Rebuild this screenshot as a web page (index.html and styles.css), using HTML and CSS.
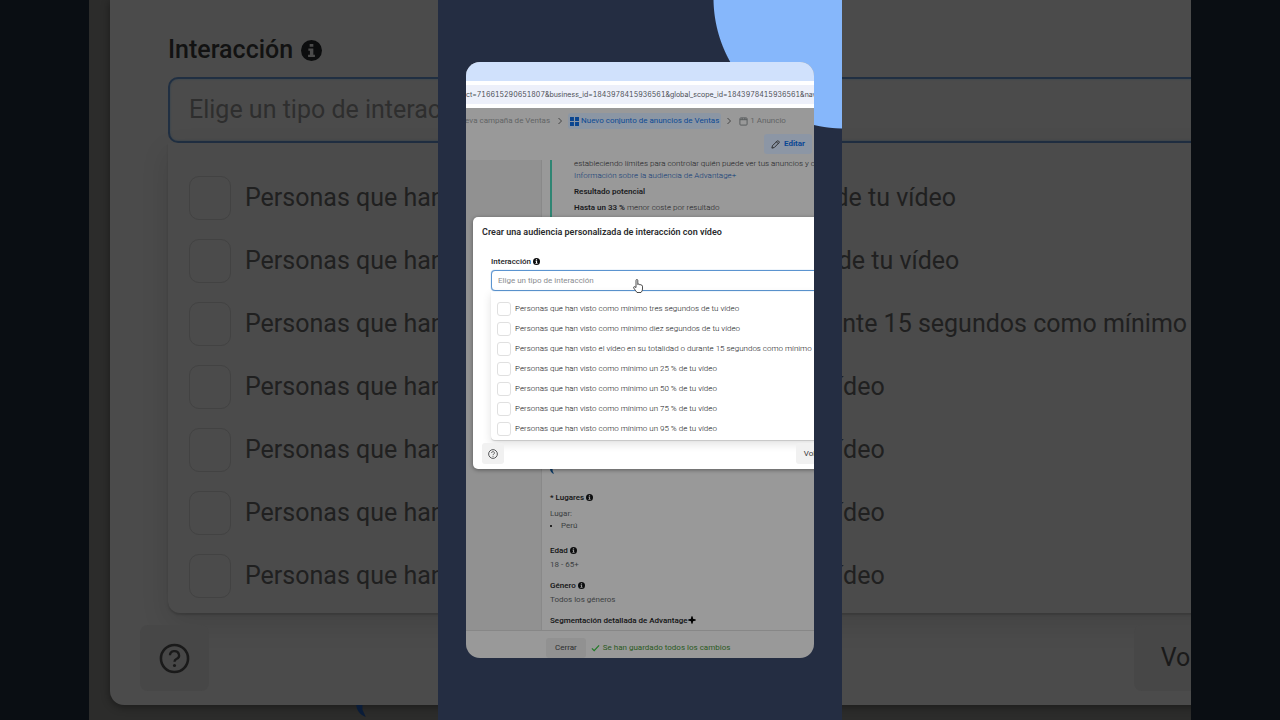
FILE: index.html
```html
<!DOCTYPE html>
<html lang="es">
<head>
    <meta charset="UTF-8">
    <meta name="viewport" content="width=device-width, initial-scale=1.0">
    <title>Crear una audiencia personalizada</title>
    <link rel="stylesheet" href="styles.css">
</head>
<body>
    <!-- Shared icons -->
    <svg class="sprite" aria-hidden="true">
        <symbol id="icon-info" viewBox="0 0 16 16">
            <circle cx="8" cy="8" r="8" fill="currentColor"/>
            <path class="info-mark" d="M6.6 3h2.8v2.2H6.6zM5.6 6.4h3.8v4.8h1.2V13H5.4v-1.8h1.4v-3H5.6z"/>
        </symbol>
        <symbol id="icon-help" viewBox="0 0 24 24">
            <circle cx="12" cy="12" r="10.5" fill="none" stroke="currentColor" stroke-width="2"/>
            <path d="M8.500 9.500a3.500 3.200 0 1 1 5 2.900c-1 .5-1.500 1-1.500 2.200" fill="none" stroke="currentColor" stroke-width="1.8"/>
            <circle cx="12" cy="17.4" r="1.2" fill="currentColor"/>
        </symbol>
    </svg>

    <!-- Enlarged dialog behind the phone -->
    <div class="backdrop" aria-hidden="true">
        <div class="backdrop-panel">
            <div class="dialog">
                <div class="dialog-body">
                    <label class="field-label" for="type-back">Interacción <svg class="info"><use href="#icon-info"/></svg></label>
                    <input class="field" id="type-back" type="text" placeholder="Elige un tipo de interacción">
                    <div class="options">
                        <label class="option"><input type="checkbox">Personas que han visto como mínimo tres segundos de tu vídeo</label>
                        <label class="option"><input type="checkbox">Personas que han visto como mínimo diez segundos de tu vídeo</label>
                        <label class="option"><input type="checkbox">Personas que han visto el vídeo en su totalidad o durante 15 segundos como mínimo</label>
                        <label class="option"><input type="checkbox">Personas que han visto como mínimo un 25 % de tu vídeo</label>
                        <label class="option"><input type="checkbox">Personas que han visto como mínimo un 50 % de tu vídeo</label>
                        <label class="option"><input type="checkbox">Personas que han visto como mínimo un 75 % de tu vídeo</label>
                        <label class="option"><input type="checkbox">Personas que han visto como mínimo un 95 % de tu vídeo</label>
                    </div>
                </div>
                <div class="dialog-footer">
                    <button class="btn help" type="button"><svg><use href="#icon-help"/></svg></button>
                    <button class="btn" type="button">Volver</button>
                </div>
            </div>
            <svg class="blue-mark" viewBox="0 0 4 5"><path d="M0 0h2.6v2L4 5C1.6 4 .3 2.500 0 0z"/></svg>
        </div>
    </div>

    <!-- Phone sized video -->
    <main class="phone">
        <div class="card">
            <div class="tabs"></div>
            <div class="address">
                <input class="url" type="text" aria-label="Dirección" readonly value="ct=716615290651807&amp;business_id=1843978415936561&amp;global_scope_id=1843978415936561&amp;nav_">
            </div>

            <div class="app">
                <nav class="crumbs">
                    <a href="#">Nueva campaña de Ventas</a>
                    <svg class="chevron" viewBox="0 0 6 8"><path d="M1.500 1l3 3-3 3"/></svg>
                    <a href="#" class="active">
                        <svg class="grid-icon" viewBox="0 0 10 10"><path d="M0 0h4.400v4.400H0zM5.600 0H10v4.400H5.600zM0 5.600h4.400V10H0zM5.600 5.600H10V10H5.600z"/></svg>
                        Nuevo conjunto de anuncios de Ventas
                    </a>
                    <svg class="chevron" viewBox="0 0 6 8"><path d="M1.500 1l3 3-3 3"/></svg>
                    <a href="#">
                        <svg class="ad-icon" viewBox="0 0 10 10"><path d="M1 3h8M3.500 1v2M6.500 1v2M2 1h6a1 1 0 0 1 1 1v6a1 1 0 0 1-1 1H2a1 1 0 0 1-1-1V2a1 1 0 0 1 1-1z"/></svg>
                        1 Anuncio
                    </a>
                </nav>
                <div class="toolbar">
                    <button class="edit" type="button">
                        <svg viewBox="0 0 10 10"><path d="M1 9l.6-2.600L7 1q.7-.5 1.400.2l.4.4q.7.700.2 1.400L3.600 8.400zM6 2l2 2"/></svg>
                        Editar
                    </button>
                </div>

                <div class="content">
                    <aside class="sidebar"></aside>
                    <div class="details">
                        <section class="advantage">
                            <p>estableciendo límites para controlar quién puede ver tus anuncios y con</p>
                            <p><a href="#">Información sobre la audiencia de Advantage+</a></p>
                            <p class="result"><b>Resultado potencial</b></p>
                            <p class="result"><b>Hasta un 33 %</b> menor coste por resultado</p>
                        </section>
                        <section class="audience">
                            <svg class="blue-mark" viewBox="0 0 4 5"><path d="M0 0h2.6v2L4 5C1.6 4 .3 2.500 0 0z"/></svg>
                            <h3>* Lugares <svg class="info"><use href="#icon-info"/></svg></h3>
                            <p class="place">Lugar:</p>
                            <ul><li>Perú</li></ul>
                            <h3>Edad <svg class="info"><use href="#icon-info"/></svg></h3>
                            <p>18 - 65+</p>
                            <h3>Género <svg class="info"><use href="#icon-info"/></svg></h3>
                            <p>Todos los géneros</p>
                            <h3>Segmentación detallada de Advantage<svg class="plus" viewBox="0 0 8 8"><path d="M4 0q.4 3.600 4 4-3.600.4-4 4-.4-3.600-4-4 3.600-.4 4-4z"/><path d="M3.300.500h1.400v7H3.300zM.5 3.300h7v1.400h-7z"/></svg></h3>
                        </section>
                    </div>
                </div>

                <footer class="app-footer">
                    <button class="close" type="button">Cerrar</button>
                    <span class="saved">
                        <svg viewBox="0 0 10 8"><path d="M1 4.500L3.500 7 9 1"/></svg>
                        Se han guardado todos los cambios
                    </span>
                </footer>

                <!-- Dialog -->
                <div class="dialog" role="dialog" aria-labelledby="dialog-title">
                    <h2 id="dialog-title">Crear una audiencia personalizada de interacción con vídeo</h2>
                    <div class="dialog-body">
                        <label class="field-label" for="type">Interacción <svg class="info"><use href="#icon-info"/></svg></label>
                        <input class="field" id="type" type="text" placeholder="Elige un tipo de interacción">
                        <div class="options">
                            <label class="option"><input type="checkbox">Personas que han visto como mínimo tres segundos de tu vídeo</label>
                            <label class="option"><input type="checkbox">Personas que han visto como mínimo diez segundos de tu vídeo</label>
                            <label class="option"><input type="checkbox">Personas que han visto el vídeo en su totalidad o durante 15 segundos como mínimo</label>
                            <label class="option"><input type="checkbox">Personas que han visto como mínimo un 25 % de tu vídeo</label>
                            <label class="option"><input type="checkbox">Personas que han visto como mínimo un 50 % de tu vídeo</label>
                            <label class="option"><input type="checkbox">Personas que han visto como mínimo un 75 % de tu vídeo</label>
                            <label class="option"><input type="checkbox">Personas que han visto como mínimo un 95 % de tu vídeo</label>
                        </div>
                    </div>
                    <div class="dialog-footer">
                        <button class="btn help" type="button" aria-label="Ayuda"><svg><use href="#icon-help"/></svg></button>
                        <button class="btn" type="button">Volver</button>
                    </div>
                    <svg class="pointer" viewBox="0 0 10 14"><path d="M3 8.500V1.500q0-1 .9-1t.9 1v4q.2-.6.9-.5t.8.800q.3-.5.900-.3t.7.900q.3-.4.8-.2t.6 1V10q0 2-1.500 3.500h-4Q2.500 11.500.7 9q-.4-.8.200-1.200T3 8.500z"/></svg>
                </div>
            </div>
        </div>
    </main>
</body>
</html>
```

FILE: styles.css
```css
* {
    box-sizing: border-box;
}

body {
    margin: 0;
    height: 100vh;
    overflow: hidden;
    position: relative;
    display: flex;
    justify-content: center;
    background-color: #0a0e13;
    font-family: Roboto, Arial, sans-serif;
    font-size: 8px;
    line-height: 12px;
    color: #3c3f42;
}

h2, h3, p, ul {
    margin: 0;
    padding: 0;
}

h3 {
    font-size: 8px;
    font-weight: 500;
    color: #111213;
}

a {
    text-decoration: none;
}

button, input {
    font-family: inherit;
    font-size: inherit;
    line-height: inherit;
    color: inherit;
}

button {
    border: none;
    cursor: pointer;
}

.sprite {
    position: absolute;
    width: 0;
    height: 0;
}

.info {
    width: 7px;
    height: 7px;
    vertical-align: -1px;
    color: #0c0d0e;
    fill: #fff;
}

.app .content .info {
    fill: #999;
}

/* Phone */
.phone {
    position: relative;
    flex: none;
    height: 100vh;
    aspect-ratio: 101 / 180;
    min-width: 0;
    padding: 62px 28px;
    display: flex;
    background: radial-gradient(circle at 406px -2px, #86b7fb 130px, transparent 131px) #242d42;
}

.card {
    flex: 1;
    min-width: 0;
    display: flex;
    flex-direction: column;
    border-radius: 14px;
    overflow: hidden;
    background-color: #999;
}

.tabs {
    height: 19px;
    background-color: #d0e1fc;
}

.address {
    padding: 4px 0;
    background-color: #fff;
}

.url {
    display: block;
    width: 100%;
    height: 19px;
    padding: 0 0 1px;
    border: none;
    background-color: #edf0fa;
    font-family: Inter, sans-serif;
    font-size: 7px;
    font-variant-numeric: tabular-nums;
    color: #4b4e55;
}

.app {
    position: relative;
    flex: 1;
    min-height: 0;
    display: flex;
    flex-direction: column;
    white-space: nowrap;
}

.crumbs {
    display: flex;
    align-items: center;
    height: 26px;
    margin-left: -11px;
    gap: 7px;
}

.crumbs a {
    display: flex;
    align-items: center;
    gap: 2px;
    color: #626465;
}

.crumbs .active {
    padding: 2px;
    margin: 0 -2px;
    border-radius: 3px;
    background-color: #8b96a4;
    color: #0d4a94;
}

.crumbs svg {
    flex: none;
}

.chevron {
    width: 6px;
    height: 8px;
    fill: none;
    stroke: #444;
}

.grid-icon {
    width: 9px;
    height: 9px;
    fill: #0a4590;
}

.ad-icon {
    width: 9px;
    height: 9px;
    fill: none;
    stroke: #55585a;
    stroke-width: 1;
}

.toolbar {
    display: flex;
    justify-content: flex-end;
    height: 26px;
    padding: 0 2px 6px;
}

.edit {
    display: flex;
    align-items: center;
    gap: 4px;
    padding: 0 7px;
    border-radius: 3px;
    background-color: #8c96a5;
    color: #0a4794;
    font-weight: 700;
}

.edit svg {
    width: 9px;
    height: 9px;
    fill: none;
    stroke: #222;
    stroke-width: 1;
}

.content {
    flex: 1;
    min-height: 0;
    display: flex;
    overflow: hidden;
}

.sidebar {
    flex: none;
    width: 76px;
    background-color: #919191;
    border-right: 1px solid #898989;
}

.details {
    flex: 1;
    min-width: 0;
    display: flex;
    flex-direction: column;
    justify-content: space-between;
    padding: 0 0 3px 8px;
}

.advantage {
    height: 260px;
    margin-top: -2px;
    padding-left: 22px;
    border-left: 2px solid #2f8573;
    font-weight: 300;
    color: #1a1b1d;
}

.advantage a {
    color: #0f3a78;
}

.advantage b {
    font-weight: 600;
}

.result {
    margin-top: 4px;
}

.audience h3 {
    margin-top: 9px;
}

.audience p {
    margin-top: 2px;
}

.audience .place {
    margin-top: 4px;
}

.audience .blue-mark + h3 {
    margin-top: 18px;
}

.audience ul {
    padding-left: 11px;
    margin-bottom: 13px;
}

.audience li::marker {
    color: #000;
}

.blue-mark {
    display: block;
    width: 4px;
    height: 5px;
    fill: #0b3a66;
}

.plus {
    width: 8px;
    height: 8px;
    vertical-align: -1px;
    fill: #000;
}

.app-footer {
    display: flex;
    gap: 5px;
    height: 28px;
    padding: 7px 0 0 80px;
    border-top: 1px solid #878787;
}

.close {
    padding: 0 9px;
    border-radius: 3px;
    background-color: #919191;
    color: #2c2d2f;
}

.saved {
    display: flex;
    align-items: center;
    gap: 3px;
    height: 19px;
    color: #2a5a1e;
}

.saved svg {
    width: 9px;
    height: 8px;
    fill: none;
    stroke: #1f7a25;
    stroke-width: 1.3;
}

/* Dialog */
.dialog {
    background-color: #fff;
    white-space: nowrap;
}

.app .dialog {
    position: absolute;
    top: 109px;
    left: 7px;
    right: -29px;
    border-radius: 5px;
    padding: 9px 9px 5px;
    box-shadow: 0 1px 4px rgba(0, 0, 0, 0.4);
}

.dialog h2 {
    font-size: 9px;
    font-weight: 600;
    line-height: 12px;
    margin-bottom: 18px;
    color: #2b2c2e;
}

.dialog-body {
    padding-left: 9px;
}

.field-label {
    display: block;
    font-weight: 500;
    color: #1c1d1f;
}

.field {
    display: block;
    width: 100%;
    height: 21px;
    margin-top: 2px;
    padding: 0 6px;
    border: 1px solid #5b94d0;
    border-radius: 4px;
    outline: none;
    background-color: #fff;
    box-shadow: 0 0 1px #5b94d0;
}

.field::placeholder {
    color: #8b8d90;
    opacity: 1;
}

.options {
    padding: 8px 6px 1px;
    border-radius: 0 0 4px 4px;
    box-shadow: 0 4px 10px rgba(0, 0, 0, 0.12), 0 1px 1px rgba(0, 0, 0, 0.15);
}

.option {
    display: flex;
    align-items: center;
    gap: 4px;
    height: 20px;
    font-weight: 300;
    color: #111214;
}

.option input {
    appearance: none;
    flex: none;
    width: 14px;
    height: 14px;
    margin: 0;
    border: 1px solid #e0e0e0;
    border-radius: 3px;
    background-color: #fff;
}

.dialog-footer {
    display: flex;
    justify-content: space-between;
    margin-top: 3px;
}

.btn {
    height: 21px;
    padding: 0 8px;
    border-radius: 3px;
    background-color: #f1f1f1;
    color: #3a3b3d;
}

.help {
    padding: 0 6px;
}

.help svg {
    display: block;
    width: 10px;
    height: 10px;
}

.pointer {
    position: absolute;
    left: 160px;
    top: 62px;
    width: 10px;
    height: 14px;
    fill: #fff;
    stroke: #222;
    stroke-width: 0.8;
}

/* Enlarged backdrop */
.backdrop {
    position: absolute;
    inset: 0;
    display: flex;
    padding: 0 89px;
    font-size: 25px;
    line-height: 30px;
}

.backdrop-panel {
    flex: 1;
    min-width: 0;
    overflow: hidden;
    padding-left: 21px;
    background-color: #2c2c2b;
}

.backdrop .dialog {
    margin-right: -96px;
    padding: 35px 30px 14px;
    border-radius: 0 0 0 14px;
    background-color: #4b4b4b;
    box-shadow: 0 2px 8px rgba(0, 0, 0, 0.4);
}

.backdrop .dialog-body {
    padding-left: 28px;
}

.backdrop .field-label {
    color: #121212;
}

.backdrop .info {
    width: 21px;
    height: 21px;
    margin-left: 2px;
    vertical-align: -3px;
    fill: #4b4b4b;
}

.backdrop .field {
    height: 66px;
    margin-top: 12px;
    padding: 0 19px 2px;
    border: 2px solid #202f42;
    border-radius: 10px;
    background-color: #4b4b4b;
    box-shadow: inset 0 0 2px #2c4050;
}

.backdrop .field::placeholder {
    color: #2e2e2e;
}

.backdrop .options {
    padding: 23px 21px 6px;
    border-radius: 0 0 12px 12px;
    box-shadow: 0 10px 28px rgba(0, 0, 0, 0.12), 0 2px 2px rgba(0, 0, 0, 0.15);
}

.backdrop .option {
    gap: 14px;
    height: 63px;
    font-weight: 400;
    color: #202020;
}

.backdrop .option input {
    width: 42px;
    height: 44px;
    border: 1px solid #424242;
    border-radius: 10px;
    background-color: #4b4b4b;
}

.backdrop .dialog-footer {
    margin-top: 12px;
}

.backdrop .btn {
    height: 66px;
    padding: 0 27px;
    border-radius: 8px;
    background-color: #474747;
    color: #1a1a1a;
}

.backdrop .help {
    padding: 0 19px;
}

.backdrop .help svg {
    width: 31px;
    height: 31px;
}

.backdrop .blue-mark {
    width: 12px;
    height: 12px;
    margin-left: 245px;
    fill: #0a1c38;
}
```
